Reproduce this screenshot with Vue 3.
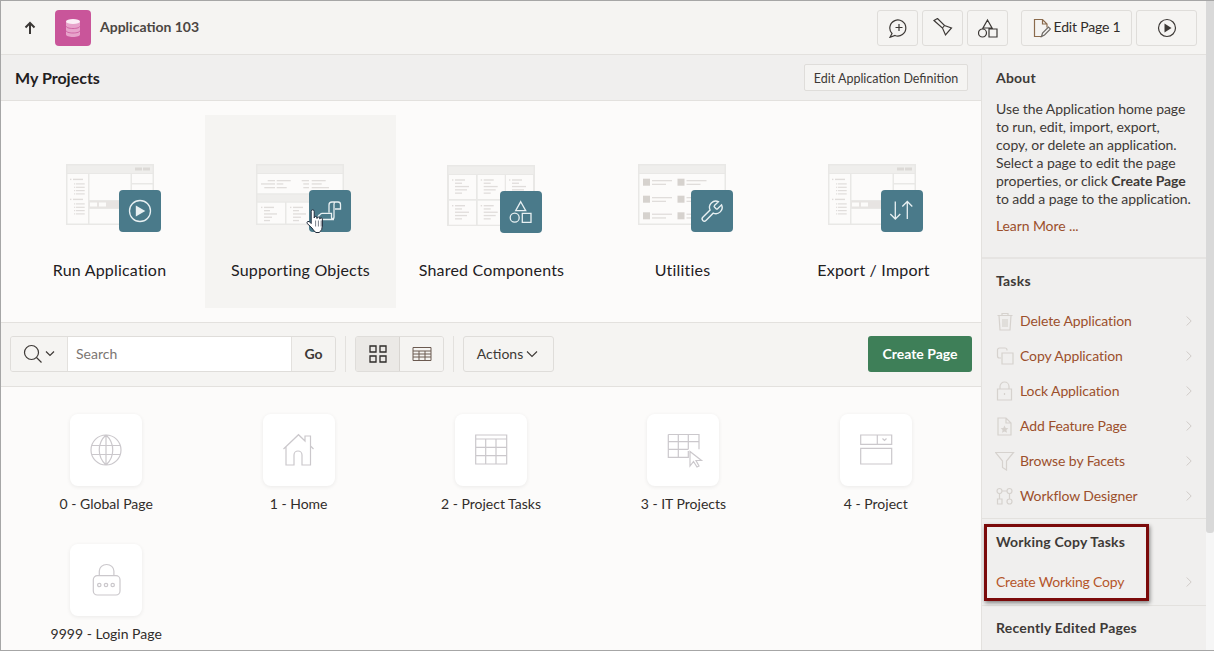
<script setup>
const C = { frame: '#e9e8e6', head: '#efeeec', panel: '#fcfbfa', line: '#e0dddb', sq: '#d6d2ce', btn: '#dcd9d6', band: '#e7e4e2' }
const r = (x, y, w, h, c = C.line) => ({ x, y, w, h, c })

function appShell() {
  const out = [r(0, 0, 88, 61, C.frame), r(1.5, 1.5, 85, 7.5, C.head), r(69, 3.5, 7, 3, C.btn), r(77, 3.5, 7, 3, C.btn),
    r(1.5, 10, 20.5, 49.5, C.panel), r(23.5, 10, 41, 26, C.panel), r(23.5, 37, 41, 7, C.band),
    r(24, 38.5, 7, 4, C.panel), r(33, 38.5, 7, 4, C.panel), r(23.5, 45, 41, 14.5, C.panel),
    r(66, 10, 20.5, 9, C.panel), r(66, 20.5, 20.5, 39, C.panel)]
  for (const y of [14.7, 34.7]) {
    out.push(r(4, y, 1.4, 1.4), r(7, y, 10, 1.4))
    for (const d of [4.6, 8, 11.3, 14.6]) out.push(r(8, y + d, 1.2, 1.2), r(10, y + d, 8.7, 1.2))
  }
  return out
}
function listBlock(x, y, widths) {
  const out = [r(x, y, 1.4, 1.4), r(x + 3, y, 10, 1.4)]
  widths.forEach((w, i) => out.push(r(x + 3, y + 3.3 * (i + 1), w, 1.3)))
  return out
}
function objectsShell() {
  const out = [r(0, 0, 88, 61, C.frame), r(1.5, 1.5, 85, 7.5, C.head), r(1.5, 10, 85, 19.3, C.panel), r(1.5, 30.5, 85, 7, C.head),
    r(1.5, 38.7, 27.5, 20.8, C.panel), r(30.5, 38.7, 27.5, 20.8, C.panel), r(59.5, 38.7, 27, 20.8, C.panel)]
  const rows = [[16, 11.7, 7.3, 14, 45.7, 7.3, 14], [19.3, 5, 14, 6.6, 47.3, 5.7, 10], [23, 8.3, 10.7, 10, 47.3, 5.7, 17.3]]
  for (const [y, a, aw, bw, c, cw, dw] of rows) {
    out.push(r(a, y, aw, 1.3), r(20.7, y, bw, 1.3), r(c, y, cw, 1.3), r(55.7, y, dw, 1.3))
  }
  out.push(...listBlock(5, 42.7, [6, 13, 8, 6]), ...listBlock(34, 42.7, [6, 13, 8, 6]))
  return out
}
function sharedShell() {
  const out = [r(0, 0, 88, 61, C.frame), r(1.5, 1.5, 85, 7.5, C.head)]
  for (const x of [2, 30.7, 59]) for (const y of [10, 35.7]) {
    out.push(r(x, y, 27, 24, C.panel), ...listBlock(x + 3, y + 4.3, [7, 14, 12, 7]))
  }
  return out
}
function utilShell() {
  const out = [r(0, 0, 88, 61, C.frame), r(1.5, 1.5, 85, 7.5, C.head), r(1.5, 10, 85, 49.5, C.panel)]
  for (const x of [5, 39.5]) for (const y of [14.7, 31.7, 48.3]) {
    out.push(r(x, y, 7, 7, C.sq), r(x + 9, y + 1.3, 20, 1.3), r(x + 9, y + 5, 14, 1.3))
  }
  return out
}
const hero = [
  { label: 'Run Application', rects: appShell(), icon: 'run', box: '0 0 88 69' },
  { label: 'Supporting Objects', rects: objectsShell(), icon: 'objects', box: '1 0 88 69', hover: true },
  { label: 'Shared Components', rects: sharedShell(), icon: 'shared', box: '1 -1 88 69' },
  { label: 'Utilities', rects: utilShell(), icon: 'util', box: '1 0 88 69' },
  { label: 'Export / Import', rects: appShell(), icon: 'export', box: '2 0 88 69' }
]

const tasks = [
  { label: 'Delete Application', d: 'M2.5 4.5h15M7 4.5V2.5h6v2M4 4.5l1 14.5h10l1-14.5M8 8v8M12 8v8M10 8v8' },
  { label: 'Copy Application', d: 'M12 4.5V4a2 2 0 0 0-2-2H4.500a2 2 0 0 0-2 2v6a2 2 0 0 0 2 2H6M7 7h11v11H7z' },
  { label: 'Lock Application', d: 'M2.500 8h14v11h-14zM5 8V5.500a4.500 4.500 0 0 1 9 0V8M9.500 12v2' },
  { label: 'Add Feature Page', d: 'M3 2h8l5 5v12H3zM11 2v5h5', star: true },
  { label: 'Browse by Facets', d: 'M.5 1.500h18l-7 8.500v9l-4-2.500V10z' },
  { label: 'Workflow Designer', d: 'M2 5a2.500 2.500 0 1 0 5 0a2.500 2.500 0 1 0-5 0M12 5a2.500 2.500 0 1 0 5 0a2.500 2.500 0 1 0-5 0M7 5h5M4.500 7.500V13M14.500 7.500V13M2.500 13h4.500v5H2.500zM12 15.500a2.500 2.500 0 1 0 5 0a2.500 2.500 0 1 0-5 0' }
]

const pages = [
  { label: '0 - Global Page', d: 'M1 16a15 15 0 1 0 30 0a15 15 0 1 0-30 0M16 1c-9 8-9 22 0 30M16 1c9 8 9 22 0 30M16 1v30M1.500 11.500h29M1.500 20.500h29' },
  { label: '1 - Home', d: 'M.5 15L15.500.7L22 7V2h5.500v10l3 3M3 12.500V31h8V21a4 4 0 0 1 8 0v10h8.500V12' },
  { label: '2 - Project Tasks', d: 'M.7 1h31v29H.7zM.7 5h31M.7 13.300h31M.7 21.700h31M10.700 5v25M21 5v25' },
  { label: '3 - IT Projects', d: 'M1.300.5H32v14.800M1.300.5v22.800h20V17M1.300 7.700H32M1.300 15.300H21.300M11.300.5v22.800M21.300.5v14.800M23 17.500V32l3.500-4.500L30 33l2-1l-3-5.500h5.500z' },
  { label: '4 - Project', d: 'M.7 1h31v9.300H.7zM17.300 1v9.300M22.500 4.500l2 2l2-2M.7 14.300h31V30H.7z' },
  { label: '9999 - Login Page', d: 'M7.300 11.700h18.700a4 4 0 0 1 4 4V27a4 4 0 0 1-4 4H7.300a4 4 0 0 1-4-4V15.700a4 4 0 0 1 4-4zM9.300 11.700V7a7.300 6.500 0 0 1 14.600 0v4.700M7.600 21a1.700 1.700 0 1 0 3.400 0a1.700 1.700 0 1 0-3.400 0M14.300 21a1.700 1.700 0 1 0 3.400 0a1.700 1.700 0 1 0-3.400 0M21 21a1.700 1.700 0 1 0 3.400 0a1.700 1.700 0 1 0-3.400 0' }
]
</script>

<template>
  <div class="app">
    <div class="shell">
      <header class="topbar">
        <svg class="up" width="12" height="14" viewBox="0 0 12 14"><path d="M6 13V2M1.500 6.500L6 2l4.500 4.500" /></svg>
        <div class="app-icon">
          <svg width="16" height="20" viewBox="0 0 16 20">
            <path class="db-body" d="M1 3.500v13c0 1.500 3 2.500 7 2.500s7-1 7-2.500v-13z" />
            <ellipse cx="8" cy="3.500" rx="7" ry="2.500" fill="#fbeef6" />
            <path class="db-line" d="M1 8c0 1.500 3 2.500 7 2.500S15 9.500 15 8M1 12.500c0 1.500 3 2.500 7 2.500s7-1 7-2.500" />
          </svg>
        </div>
        <span class="app-name">Application 103</span>
        <div class="top-actions">
          <button class="tbtn">
            <svg width="20" height="20" viewBox="0 0 20 20"><path d="M4 15.500A8 8 0 1 1 7 17.500L2 19.300z" /><path d="M11 6v7M7.500 9.500h7" /></svg>
          </button>
          <button class="tbtn">
            <svg width="20" height="20" viewBox="0 0 20 20"><path d="M1 2.500L4.500.5l7 7l7 2.500l-6 7l-3-7zM9.500 10l2-2.500" /></svg>
          </button>
          <button class="tbtn gap-right">
            <svg width="20" height="20" viewBox="0 0 20 20"><path d="M9.500 2l4.500 8H5zM.5 15a4 4 0 1 0 8 0a4 4 0 1 0-8 0zM11 11h8v8h-8z" /></svg>
          </button>
          <button class="tbtn edit">
            <svg width="18" height="20" viewBox="0 0 18 20"><path d="M9 18.500H1.500V1.500h8l4.500 4.500v3.500M9.500 1.500V6H14" /><path class="pen" d="M8.500 18.500l1-3.500l6-6l2 2l-6 6z" /></svg>
            <span>Edit Page 1</span>
          </button>
          <button class="tbtn run">
            <svg width="20" height="20" viewBox="0 0 20 20"><circle cx="10" cy="10" r="8.500" /><path class="solid" d="M7.500 5.500l7 4.500l-7 4.500z" /></svg>
          </button>
        </div>
      </header>

      <div class="content">
        <main class="main">
          <div class="titlebar">
            <h1>My Projects</h1>
            <button class="def">Edit Application Definition</button>
          </div>

          <section class="hero">
            <div v-for="t in hero" :key="t.label" class="tile" :class="{ hover: t.hover }">
              <svg class="illus" width="88" height="69" :viewBox="t.box">
                <rect v-for="(b, i) in t.rects" :key="i" :x="b.x" :y="b.y" :width="b.w" :height="b.h" :fill="b.c" />
                <rect x="53" y="26" width="42" height="42" rx="4" fill="#4a7a8a" />
                <g class="bi">
                  <template v-if="t.icon === 'run'">
                    <circle cx="74" cy="47" r="10.500" />
                    <path class="bi-fill" d="M69.800 41.500l9.500 5.500l-9.500 5.500z" />
                  </template>
                  <template v-else-if="t.icon === 'objects'">
                    <path d="M73 48.500V41a3 3 0 0 1 3-3h6a2.500 2.500 0 0 1 2.500 2.500V45H79M79 38.300a2.500 2.500 0 0 0-1 1.700v13a2.500 2.500 0 0 1-2.500 2.500H66a2.500 2.500 0 0 1-2-4.800a3 3 0 0 1 2-1.400h9.500V53a2.500 2.500 0 0 0 2.500 2.500" />
                  </template>
                  <template v-else-if="t.icon === 'shared'">
                    <path d="M73.700 36.700l5 9h-10zM75.300 48.300h8.700v9h-8.700z" />
                    <circle cx="67.700" cy="52.700" r="4.500" />
                  </template>
                  <template v-else-if="t.icon === 'util'">
                    <path transform="translate(61 35) scale(1.050)" d="M14.700 6.300a1 1 0 0 0 0 1.400l1.600 1.600a1 1 0 0 0 1.400 0l3.770-3.770a6 6 0 0 1-7.940 7.940l-6.910 6.910a2.120 2.120 0 0 1-3-3l6.910-6.910a6 6 0 0 1 7.940-7.940l-3.760 3.760z" />
                  </template>
                  <template v-else>
                    <path d="M67.300 37.500V55M62.300 50l5 5l5-5M79.300 55V37.500M74.300 42.500l5-5l5 5" />
                  </template>
                </g>
                <g v-if="t.hover" class="hand">
                  <path d="M55.200 47.500q0-1.700 1.500-1.700t1.500 1.700V54q0-1.500 1.400-1.500t1.400 1.500v.5q0-1.400 1.400-1.400t1.400 1.400v.6q0-1.300 1.300-1.300t1.300 1.300V62q0 4-3 6.500H60q-2-1-4-4.500l-4.800-4.500q-.8-1.500.6-2q1.300-.5 2.500 1l.9 1z" />
                  <path d="M59.600 56.500v6M62.400 56.500v6M65.200 56.500v6" />
                </g>
              </svg>
              <span class="tile-label">{{ t.label }}</span>
            </div>
          </section>

          <section class="toolbar">
            <div class="search">
              <button class="search-btn">
                <svg width="36" height="22" viewBox="0 0 36 22">
                  <circle cx="9.500" cy="9.500" r="7" />
                  <path d="M14.500 14.500l5 5M24 8.500l4 4l4-4" />
                </svg>
              </button>
              <input class="search-input" placeholder="Search" />
              <button class="go">Go</button>
            </div>
            <span class="sep"></span>
            <div class="toggle">
              <button class="tg active">
                <svg width="18" height="18" viewBox="0 0 18 18"><path d="M1 1h6v6H1zM11 1h6v6h-6zM1 11h6v6H1zM11 11h6v6h-6z" /></svg>
              </button>
              <button class="tg">
                <svg width="20" height="16" viewBox="0 0 20 16"><path class="brown" d="M1 1.500h18v13H1zM1 5h18M1 8h18M1 11h18M7 5v9.500M13 5v9.500" /></svg>
              </button>
            </div>
            <span class="sep"></span>
            <button class="actions">Actions
              <svg width="12" height="8" viewBox="0 0 12 8"><path d="M1 1.500l5 5l5-5" /></svg>
            </button>
            <button class="create">Create Page</button>
          </section>

          <section class="cards">
            <div v-for="p in pages" :key="p.label" class="page">
              <div class="page-card">
                <svg width="32" height="32" viewBox="0 0 32 32"><path :d="p.d" /></svg>
              </div>
              <span class="page-label">{{ p.label }}</span>
            </div>
          </section>
        </main>

        <aside class="side">
          <div class="sec about">
            <h2>About</h2>
            <p>Use the Application home page to run, edit, import, export, copy, or delete an application. Select a page to edit the page properties, or click <b>Create Page</b> to add a page to the application.</p>
            <a class="more">Learn More ...</a>
          </div>
          <div class="sec tasks">
            <h2>Tasks</h2>
            <ul>
              <li v-for="t in tasks" :key="t.label">
                <svg class="ti" width="20" height="20" viewBox="0 0 20 20">
                  <path :d="t.d" />
                  <path v-if="t.star" class="star" d="M9.500 9.500l1.200 2.500l2.700.3l-2 1.800l.6 2.700l-2.500-1.400l-2.500 1.400l.6-2.700l-2-1.800l2.700-.3z" />
                </svg>
                <span>{{ t.label }}</span>
                <svg class="chev" width="6" height="10" viewBox="0 0 6 10"><path d="M.7.500L5.200 5L.7 9.500" /></svg>
              </li>
            </ul>
          </div>
          <div class="sec working">
            <h2>Working Copy Tasks</h2>
            <div class="wrow">
              <span>Create Working Copy</span>
              <svg class="chev" width="6" height="10" viewBox="0 0 6 10"><path d="M.7.500L5.200 5L.7 9.500" /></svg>
            </div>
          </div>
          <div class="sec recent">
            <h2>Recently Edited Pages</h2>
          </div>
          <div class="callout"></div>
        </aside>
      </div>
    </div>
    <div class="scroll"><div class="thumb"></div></div>
  </div>
</template>

<style>
html, body { margin: 0; padding: 0; background: #fcfbfa; }
</style>

<style scoped>
* { box-sizing: border-box; }
.app {
  width: 1214px; height: 651px; display: flex; overflow: hidden;
  border-top: 1px solid #a6a6a6; border-left: 1px solid #a6a6a6; border-bottom: 1px solid #a6a6a6;
  font-family: Lato, "Noto Sans", sans-serif; color: #312d2a; font-size: 14px;
}
.shell { width: 1205px; display: flex; flex-direction: column; height: 100%; }
.scroll { width: 8px; background: #f6f6f6; }
.thumb { height: 532px; background: #d9d9d9; border-radius: 0 0 3px 3px; }
svg path, svg circle { fill: none; }
button { font-family: inherit; cursor: default; }

.topbar {
  height: 54px; flex: none; background: #f5f4f2; border-bottom: 1px solid #e3e1de;
  display: flex; align-items: center; padding: 0 9px 0 23px;
}
.up { margin-right: 19px; margin-top: 1px; }
.up path { stroke: #3a3735; stroke-width: 2; }
.app-icon {
  width: 36px; height: 36px; background: #c9559a; border-radius: 4px;
  display: flex; align-items: center; justify-content: center;
}
.app-icon path.db-body { fill: #e7a3cb; }
.app-icon path.db-line { stroke: #c9559a; stroke-width: .8; }
.app-name { margin: 0 0 2px 9px; font-weight: 700; font-size: 14px; color: #4b4642; }
.top-actions { margin-left: auto; display: flex; gap: 4px; }
.tbtn {
  width: 41px; height: 36px; background: #f5f4f2; border: 1px solid #dfddda; border-radius: 3px;
  display: flex; align-items: center; justify-content: center; padding: 0;
  font-size: 14px; color: #312d2a;
}
.tbtn path, .tbtn circle { stroke: #3d3936; stroke-width: 1.200; }
.tbtn path.solid { fill: #3d3936; stroke: none; }
.tbtn path.pen { stroke: #6e6a66; }
.gap-right { margin-right: 9px; }
.edit { width: 111px; gap: 3px; }
.edit span { margin-bottom: 2px; letter-spacing: -.2px; }
.edit path:first-child { stroke: #8a6a4c; }
.run { width: 61px; }

.content { flex: 1; min-height: 0; display: flex; }
.main { width: 980px; flex: none; display: flex; flex-direction: column; background: #fcfbfa; overflow: hidden; }
.titlebar {
  height: 46px; flex: none; background: #f0efee; border-bottom: 1px solid #e3e1de;
  display: flex; align-items: center; justify-content: space-between; padding: 0 13px 0 14px;
}
.titlebar h1 { margin: 0; font-size: 16px; font-weight: 700; color: #22201e; }
.def {
  height: 27px; width: 164px; padding: 2px 0 0; background: #f5f4f2; border: 1px solid #dfddda; border-radius: 2px;
  font-size: 12.500px; color: #3d3936; margin-top: -1px;
}

.hero { height: 222px; flex: none; padding: 14px 0 0 13px; display: flex; border-bottom: 1px solid #e3e1de; }
.tile { width: 191px; height: 193px; display: flex; flex-direction: column; align-items: center; padding-top: 49px; }
.tile.hover { background: #f5f4f2; }
.illus { overflow: visible; flex: none; }
.tile-label { margin-top: 26px; font-size: 16px; line-height: 22px; color: #22201e; letter-spacing: .2px; }
.bi path, .bi circle { stroke: #e8f0f2; stroke-width: 1.300; }
.bi path.bi-fill { fill: #e8f0f2; stroke: none; }
.hand path:first-child { fill: #fff; stroke: #1f2a3a; stroke-width: 1; }
.hand path { stroke: #1f2a3a; stroke-width: .6; }

.toolbar {
  height: 64px; flex: none; background: #f5f4f2; border-bottom: 1px solid #e3e1de;
  display: flex; align-items: flex-start; padding: 13px 9px 0 9px;
}
.search {
  width: 326px; height: 36px; display: flex; border: 1px solid #dfddda; border-radius: 3px; overflow: hidden;
}
.search-btn { width: 57px; flex: none; background: #f5f4f2; border: 0; border-right: 1px solid #e3e1de; padding: 0 0 0 2px; display: flex; align-items: center; justify-content: center; }
.search-btn path, .search-btn circle { stroke: #3d3936; stroke-width: 1.200; }
.search-input { flex: 1; min-width: 0; border: 0; outline: 0; background: #fff; padding: 0 8px 2px; font-family: inherit; font-size: 14px; }
.search-input::placeholder { color: #7c7672; opacity: 1; }
.go { width: 44px; flex: none; background: #f5f4f2; border: 0; border-left: 1px solid #e3e1de; padding: 0 0 2px; font-weight: 700; font-size: 14px; color: #3d3936; }
.sep { width: 1px; height: 36px; background: #e3e1de; margin: 0 9px; flex: none; }
.toggle { width: 89px; height: 36px; display: flex; border: 1px solid #dfddda; border-radius: 3px; overflow: hidden; }
.tg { flex: 1; background: #f5f4f2; border: 0; padding: 0; display: flex; align-items: center; justify-content: center; }
.tg.active { background: #ebe9e6; border-right: 1px solid #d8d5d1; }
.tg path { stroke: #2e2b29; stroke-width: 1.300; }
.tg path.brown { stroke: #6b5a50; stroke-width: 1; }
.actions {
  width: 91px; height: 36px; background: #f5f4f2; border: 1px solid #dfddda; border-radius: 3px; padding: 0 2px 2px 0;
  display: flex; align-items: center; justify-content: center; gap: 3px; font-size: 14px; color: #3d3936;
}
.actions svg { margin-top: 2px; }
.actions path { stroke: #3d3936; stroke-width: 1.100; }
.create {
  margin-left: auto; width: 104px; height: 36px; background: #3e7f58; border: 0; border-radius: 3px;
  color: #fff; font-weight: 700; font-size: 14px; padding: 0 0 2px;
}

.cards { flex: 1; min-height: 0; padding: 0 0 0 9px; display: grid; grid-template-columns: repeat(5, 192.400px); grid-auto-rows: 130px; }
.page { padding-top: 27px; display: flex; flex-direction: column; align-items: center; }
.page-card {
  width: 72px; height: 72px; background: #fff; border-radius: 8px; box-shadow: 0 1px 4px rgba(0,0,0,.07);
  display: flex; align-items: center; justify-content: center; flex: none;
}
.page-card svg { overflow: visible; }
.page-card path { stroke: #cbc8cc; stroke-width: 1.200; }
.page-label { margin-top: 8px; font-size: 14px; line-height: 20px; color: #312d2a; white-space: nowrap; }

.side { width: 225px; flex: none; position: relative; background: #f0efee; border-left: 1px solid #e3e1de; overflow: hidden; }
.sec h2 { margin: 0; font-size: 14px; line-height: 18px; font-weight: 700; color: #3e3a37; padding-left: 14px; letter-spacing: .2px; }
.about { height: 204px; padding-top: 14px; border-bottom: 2px solid #e6e4e2; }
.about p { margin: 13px 12px 0 14px; font-size: 14px; line-height: 18px; color: #3e3a37; letter-spacing: -.06px; }
.about b { font-weight: 700; }
.more { display: block; margin: 9px 0 0 14px; line-height: 18px; color: #9c4f2c; letter-spacing: -.1px; }
.tasks { height: 260px; padding-top: 13px; border-bottom: 1px solid #e3e1de; }
.tasks ul { list-style: none; margin: 13px 0 0; padding: 0; }
.tasks li { height: 35px; display: flex; align-items: center; padding: 0 14px 0 13px; color: #9c4f2c; letter-spacing: -.1px; }
.ti { margin-right: 5px; flex: none; }
.ti path { stroke: #d6d2ce; stroke-width: 1.200; }
.ti path.star { fill: #d6d2ce; stroke: none; }
.chev { margin-left: auto; flex: none; }
.chev path { stroke: #cfcbc7; stroke-width: 1; }
.working { height: 87px; padding-top: 14px; border-bottom: 1px solid #e3e1de; }
.wrow { height: 35px; margin-top: 13px; display: flex; align-items: center; padding: 0 14px; color: #b5562a; letter-spacing: -.2px; }
.recent { padding-top: 13px; }
.callout {
  position: absolute; left: 2px; top: 469px; width: 165px; height: 77px;
  border: 3px solid #7b0a0a; box-shadow: 1px 2px 4px rgba(0,0,0,.45);
}
</style>
